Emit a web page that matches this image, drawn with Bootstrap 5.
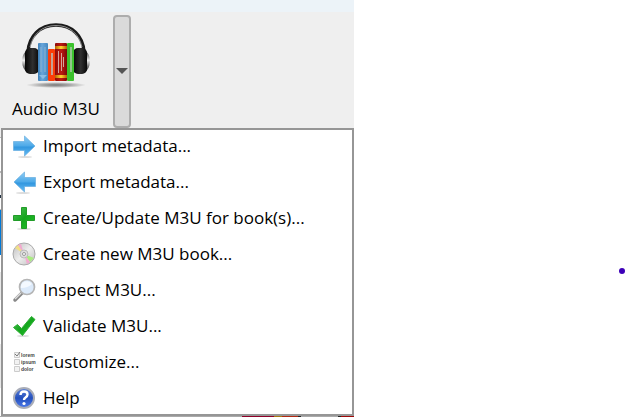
<!DOCTYPE html>
<html lang="en">
<head>
<meta charset="utf-8">
<meta name="viewport" content="width=device-width, initial-scale=1">
<title>Audio M3U</title>
<link href="https://cdn.jsdelivr.net/npm/bootstrap@5.3.0/dist/css/bootstrap.min.css" rel="stylesheet">
<style>
body{font-family:"Open Sans","Noto Sans",sans-serif;font-size:17px;line-height:24px;color:#000;background:#fff}
.topstrip{height:12px;background:#ecf3f8}
.toolarea{background:#efefef;padding:3px 0 0 6px;height:116px}
.toolbtn{font-size:17px;line-height:24px;color:#000;padding:4px 6px 0;border:0;border-radius:0;margin-right:7px}
.toolbtn svg{margin-bottom:8px}
.dropbtn{width:18px;height:113px;padding:0;border:2px solid #adadad;border-radius:4px;background:#dadada}
.dropbtn:hover{background:#dadada;border-color:#adadad}
.edge{width:1px;background:linear-gradient(#efefef 9px,#b9b9b9 9px 10px,#fff 10px 43px,#b9b9b9 43px 45px,#f4f4f4 45px 67px,#234 67px 70px,#fff 70px 81px,#b9b9b9 81px 82px,#0078d7 82px 127px,#fff 127px 144px,#e8e8e8 144px 172px,#fff 172px 216px,#e8e8e8 216px 260px,#fff 260px)}
.toolmenu{border:2px solid #969696;background:#fff;gap:4px}
.toolmenu .menu-entry{height:32px;padding:0 47px 0 8px;gap:6px;font-size:17px;line-height:24px;color:#000;border:0;border-radius:0;text-align:left;white-space:nowrap}
.menu-entry svg{flex:none}
.shelf{height:1px;background:linear-gradient(90deg,#aaa 242px,#900028 242px 274px,#a97a10 274px 282px,#b32912 282px 298px,#222 298px 301px,#aaa 301px 338px,#222 338px 341px,#a00808 341px)}
.canvas-side{padding:268px 1px 0 0}
.dot{width:6px;height:6px;background:#3d00b8}
</style>
<script src="https://cdn.jsdelivr.net/npm/bootstrap@5.3.0/dist/js/bootstrap.bundle.min.js"></script>
</head>
<body>
<div class="d-flex align-items-start">
<main class="flex-shrink-0">
<div class="topstrip"></div>
<div class="toolarea d-flex align-items-start">
<button type="button" class="btn toolbtn d-flex flex-column align-items-center">
<svg width="72" height="70" viewBox="0 0 72 70" aria-hidden="true">
<defs>
<radialGradient id="shade"><stop offset="0" stop-color="#777"/><stop offset=".5" stop-color="#aaa"/><stop offset="1" stop-color="#efefef"/></radialGradient>
<linearGradient id="gold" x1="0" x2="1"><stop offset="0" stop-color="#b75f00"/><stop offset=".5" stop-color="#ffd52e"/><stop offset="1" stop-color="#b75f00"/></linearGradient>
<linearGradient id="bluebook" x1="0" x2="1"><stop offset="0" stop-color="#3c7fb8"/><stop offset=".4" stop-color="#68a6db"/><stop offset="1" stop-color="#4488c0"/></linearGradient>
<linearGradient id="redbook" x1="0" x2="1"><stop offset="0" stop-color="#8d0a0a"/><stop offset=".5" stop-color="#bd1b12"/><stop offset="1" stop-color="#7d0808"/></linearGradient>
<linearGradient id="pad" x1="0" x2="1"><stop offset="0" stop-color="#050505"/><stop offset=".55" stop-color="#303030"/><stop offset="1" stop-color="#080808"/></linearGradient>
<linearGradient id="cup" x1="0" x2="0" y1="0" y2="1"><stop offset="0" stop-color="#222"/><stop offset=".45" stop-color="#eee"/><stop offset=".7" stop-color="#777"/><stop offset="1" stop-color="#111"/></linearGradient>
</defs>
<ellipse cx="36" cy="66" rx="30" ry="3" fill="url(#shade)"/>
<path d="M8 33C9 17 20 6 36 6s27 11 28 27" fill="none" stroke="#1a1a1a" stroke-width="3.400"/>
<path d="M10 28C13 15 22 6.500 36 6.500s23 8.500 26 21.500" fill="none" stroke="#bbb" stroke-width=".7"/>
<path d="M8 31Q2 34 2 42t6 12zM64 31q6 3 6 11t-6 12z" fill="url(#cup)"/>
<rect x="5" y="29" width="14" height="26" rx="5" fill="url(#pad)"/><rect x="53" y="29" width="14" height="26" rx="5" fill="url(#pad)"/>
<rect x="18" y="24" width="10" height="38" rx="1" fill="url(#bluebook)"/><path d="M21 28v25M25 28v25" stroke="#8fb4d4"/><path d="m19 56 4 4 4-4z" fill="#8cbde5"/>
<rect x="28" y="30" width="7" height="32" rx="1" fill="#fa3c08"/><path d="M32 34v22" stroke="#c5a295" stroke-width="2"/>
<rect x="35" y="24" width="12" height="38" rx="1" fill="url(#redbook)"/><path d="M35 27h12v3H35zM35 56h12v3H35z" fill="url(#gold)"/><path d="M38.500 32v22M41.500 34v18M43.500 38v10" stroke="#d5a39d"/>
<rect x="47" y="24" width="7" height="38" rx="1" fill="#3cc22d"/><path d="M51 28v25" stroke="#91c88a" stroke-width="2"/>
</svg>
<span>Audio M3U</span>
</button>
<button type="button" class="btn dropbtn d-flex align-items-center justify-content-center" aria-label="Open Audio M3U menu">
<svg class="flex-shrink-0" width="12" height="7" viewBox="0 0 12 7" aria-hidden="true"><path d="M0 0h12L6 6z" fill="#555"/></svg>
</button>
</div>
<div class="d-flex">
<div class="edge"></div>
<div class="toolmenu d-flex flex-column flex-grow-1">
<button type="button" class="btn menu-entry d-flex align-items-center">
<svg width="26" height="26" viewBox="0 0 26 26" aria-hidden="true"><defs><linearGradient id="arrow" x1="0" x2="0" y1="0" y2="1"><stop offset="0" stop-color="#8fcdf5"/><stop offset=".5" stop-color="#4da9e8"/><stop offset=".55" stop-color="#3297df"/><stop offset="1" stop-color="#67bcf5"/></linearGradient></defs><ellipse cx="14" cy="24" rx="7" ry="1" fill="#ddd"/><path d="M2.500 8.500h11V3L24 13 13.500 23v-5.500h-11z" fill="url(#arrow)" stroke="#66aedf" stroke-width=".7"/></svg>
<span>Import metadata...</span></button>
<button type="button" class="btn menu-entry d-flex align-items-center">
<svg width="26" height="26" viewBox="0 0 26 26" aria-hidden="true"><ellipse cx="12" cy="24" rx="7" ry="1" fill="#ddd"/><path d="M24.500 8.500h-11V3L3 13l10.500 10v-5.500h11z" fill="url(#arrow)" stroke="#66aedf" stroke-width=".7"/></svg>
<span>Export metadata...</span></button>
<button type="button" class="btn menu-entry d-flex align-items-center">
<svg width="26" height="26" viewBox="0 0 26 26" aria-hidden="true"><defs><linearGradient id="plus" x1="0" x2="1" y1="0" y2="1"><stop offset="0" stop-color="#53c35b"/><stop offset=".5" stop-color="#15a51d"/><stop offset="1" stop-color="#20c62a"/></linearGradient></defs><ellipse cx="13" cy="24" rx="7" ry="1" fill="#ddd"/><path d="M10.500 2.500h5v8h8v5h-8v8h-5v-8h-8v-5h8z" fill="url(#plus)" stroke="#229c29"/></svg>
<span>Create/Update M3U for book(s)...</span></button>
<button type="button" class="btn menu-entry d-flex align-items-center">
<svg width="26" height="26" viewBox="0 0 26 26" aria-hidden="true"><defs><linearGradient id="disc" x1="0" x2="1" y1="0" y2="1"><stop offset="0" stop-color="#bbb"/><stop offset=".5" stop-color="#eee"/><stop offset="1" stop-color="#bcbcbc"/></linearGradient></defs><circle cx="13" cy="13" r="11" fill="url(#disc)" stroke="#aaa"/><path d="M13 13 4 7l3-3z" fill="#f2df86"/><path d="m13 13-6-9 3-1z" fill="#f2a9cf"/><path d="m13 13 10 4-4 4z" fill="#a9ed80"/><path d="m13 13 6 8-3 2z" fill="#f2a9cf"/><circle cx="13" cy="13" r="4" fill="#ddd" stroke="#bbb"/><circle cx="13" cy="13" r="1.500" fill="#fff" stroke="#999"/></svg>
<span>Create new M3U book...</span></button>
<button type="button" class="btn menu-entry d-flex align-items-center">
<svg width="26" height="26" viewBox="0 0 26 26" aria-hidden="true"><path d="m11 16-7 7" stroke="#888" stroke-width="3.500" stroke-linecap="round"/><path d="m10 16-6 6" stroke="#ddd" stroke-width="1.500"/><circle cx="16" cy="10" r="7.500" fill="#dceafa" stroke="#b5b5b5" stroke-width="1.700"/><path d="M10 11a6 6 0 0 1 11-4q-4 4-11 4" fill="#f4f9ff"/></svg>
<span>Inspect M3U...</span></button>
<button type="button" class="btn menu-entry d-flex align-items-center">
<svg width="26" height="26" viewBox="0 0 26 26" aria-hidden="true"><ellipse cx="12" cy="23" rx="6" ry="1" fill="#ddd"/><path d="m2.500 14.500 4-3 4 4 10-12 3.500 3L11.500 22.500z" fill="url(#plus)" stroke="#2caf34"/></svg>
<span>Validate M3U...</span></button>
<button type="button" class="btn menu-entry d-flex align-items-center">
<svg width="26" height="26" viewBox="0 0 26 26" aria-hidden="true"><g fill="#f2f2f2" stroke="#ccc"><path d="M3.500 3.500h5v5h-5zM3.500 10.500h5v5h-5zM3.500 17.500h5v5h-5z"/></g><path d="m4 5 2 2 3-4" fill="none" stroke="#777"/><g font-family="Liberation Sans, sans-serif" font-size="5" font-weight="bold" fill="#444"><text x="10" y="8">lorem</text><text x="10" y="15">ipsum</text><text x="10" y="22">dolor</text></g></svg>
<span>Customize...</span></button>
<button type="button" class="btn menu-entry d-flex align-items-center">
<svg width="26" height="26" viewBox="0 0 26 26" aria-hidden="true"><defs><linearGradient id="help" x1="0" x2="0" y1="0" y2="1"><stop offset="0" stop-color="#5f83d9"/><stop offset=".5" stop-color="#2450bd"/><stop offset="1" stop-color="#4c7aec"/></linearGradient></defs><circle cx="13" cy="13" r="10" fill="url(#help)" stroke="#a9adb8" stroke-width="2"/><path d="M9.500 10q0-3.500 3.500-3.500t3.500 3q0 1.500-2 3-1.500 1-1.500 2.500" fill="none" stroke="#fff" stroke-width="2.400"/><circle cx="13" cy="18.500" r="1.600" fill="#fff"/></svg>
<span>Help</span></button>
</div>
</div>
<div class="shelf"></div>
</main>
<aside class="canvas-side ms-auto"><div class="dot rounded-circle"></div></aside>
</div>
</body>
</html>
